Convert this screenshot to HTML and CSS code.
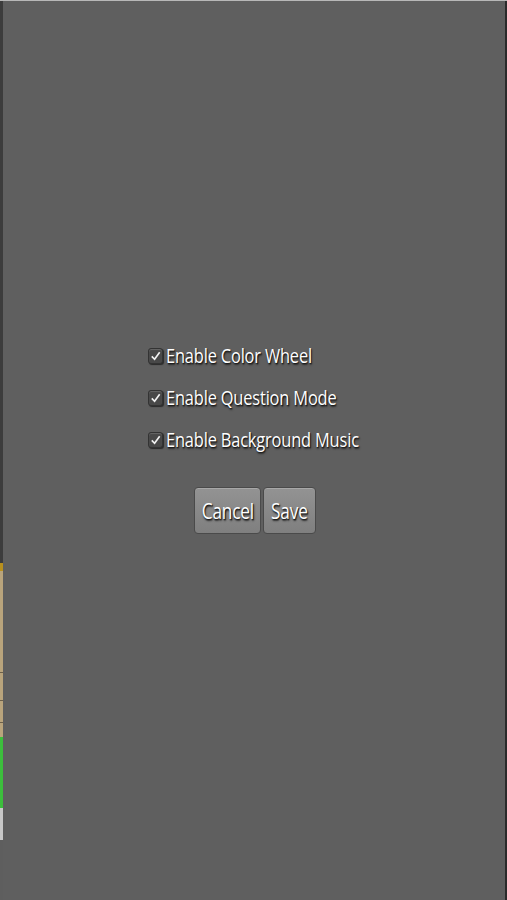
FILE: index.html
```html
<!DOCTYPE html>
<html lang="en">
<head>
    <meta charset="UTF-8">
    <meta name="viewport" content="width=device-width, initial-scale=1.0">
    <title>Settings</title>
    <link rel="stylesheet" href="styles.css">
</head>
<body>
    <div class="screen">
        <!-- sliver of the game board peeking out behind the dialog -->
        <div class="behind">
            <div class="band band-dark"></div>
            <div class="band band-gold"></div>
            <div class="band band-tan tall"></div>
            <div class="band band-tan"></div>
            <div class="band band-tan mid"></div>
            <div class="band band-tan short"></div>
            <div class="band band-green"></div>
            <div class="band band-light"></div>
            <div class="band band-grey"></div>
        </div>

        <div class="dialog">
            <div class="options">
                <label class="option">
                    <span class="check"><svg viewBox="0 0 14 14"><path d="M3 7.5 L6 10.5 L11.5 3"/></svg></span>
                    <span class="label-text">Enable Color Wheel</span>
                </label>
                <label class="option">
                    <span class="check"><svg viewBox="0 0 14 14"><path d="M3 7.5 L6 10.5 L11.5 3"/></svg></span>
                    <span class="label-text">Enable Question Mode</span>
                </label>
                <label class="option">
                    <span class="check"><svg viewBox="0 0 14 14"><path d="M3 7.5 L6 10.5 L11.5 3"/></svg></span>
                    <span class="label-text">Enable Background Music</span>
                </label>
            </div>
            <div class="buttons">
                <button class="btn btn-cancel"><span class="label-text">Cancel</span></button>
                <button class="btn btn-save"><span class="label-text">Save</span></button>
            </div>
        </div>
    </div>
</body>
</html>
```

FILE: styles.css
```css
body {
    margin: 0;
    background-color: #2e2e2e;
    font-family: "Open Sans", "DejaVu Sans", sans-serif;
}
.screen {
    display: flex;
    height: 900px;
    border-top: 1px solid #b8b8b8;
    box-sizing: border-box;
}
.behind {
    width: 3px;
    display: flex;
    flex-direction: column;
}
.band {
    width: 100%;
}
.band-dark {
    height: 562px;
    background-color: #3c3c3c;
}
.band-gold {
    height: 8px;
    background-color: #b8901e;
}
.band-tan {
    height: 27px;
    background-color: #b9a47c;
    border-bottom: 1px solid #6d604a;
}
.band-tan.tall {
    height: 101px;
}
.band-tan.mid {
    height: 21px;
}
.band-tan.short {
    height: 14px;
    border-bottom: none;
}
.band-green {
    height: 71px;
    background-color: #3cbf3c;
}
.band-light {
    height: 32px;
    background-color: #c8c8c8;
}
.band-grey {
    flex: 1;
    background-color: #5e5e5e;
}
.dialog {
    flex: 1;
    background-color: #5f5f5f;
    border-right: 2px solid #2a2a2a;
    display: flex;
    flex-direction: column;
    padding-top: 343px;
    color: #fff;
}
.options {
    display: flex;
    flex-direction: column;
    gap: 18px;
    margin-left: 145px;
}
.option {
    display: flex;
    align-items: center;
    gap: 3px;
    height: 24px;
}
.check {
    width: 13px;
    height: 14px;
    border: 1px solid #333;
    border-radius: 3px;
    background-color: #484848;
    box-shadow: inset 0 1px 1px #666, 1px 1px 1px #2a2a2a;
    display: flex;
}
.check svg {
    width: 14px;
    height: 14px;
    fill: none;
    stroke: #f2f2f2;
    stroke-width: 1.8;
}
.label-text {
    display: inline-block;
    font-size: 20px;
    line-height: 24px;
    letter-spacing: -0.2px;
    text-shadow: 1px 1px 1px #1a1a1a, 1px 2px 2px #2a2a2a;
    transform: scaleX(0.82);
    transform-origin: left center;
    white-space: nowrap;
}
.buttons {
    display: flex;
    justify-content: center;
    gap: 2px;
    margin-top: 35px;
    margin-left: 2px;
}
.btn {
    height: 47px;
    border: 1px solid #4a4a4a;
    border-radius: 4px;
    background: linear-gradient(#939393, #7f7f7f);
    color: #fff;
    font-family: inherit;
    padding: 0;
    box-shadow: inset 0 1px 0 #a8a8a8;
    overflow: hidden;
}
.btn .label-text {
    transform-origin: center center;
    font-size: 21px;
}
.btn-cancel {
    width: 67px;
}
.btn-save {
    width: 53px;
}
```
